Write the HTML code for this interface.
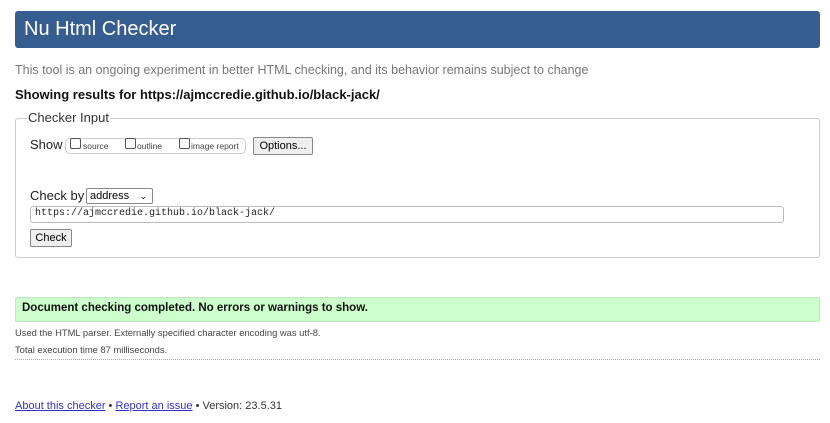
<!DOCTYPE html>
<html><head><style>
body{margin:0;width:830px;height:423px;background:#fff;font-family:"Liberation Sans",sans-serif;color:#000;position:relative;overflow:hidden}
.a{position:absolute;white-space:nowrap}
</style></head><body>
<div class="a" style="left:15px;top:11px;width:805px;height:37px;background:#365d8f;border-radius:3px"></div>
<div class="a" style="left:24px;top:18px;font-size:20px;color:#fff">Nu Html Checker</div>
<div class="a" style="left:15px;top:63px;font-size:12.5px;color:#777">This tool is an ongoing experiment in better HTML checking, and its behavior remains subject to change</div>
<div class="a" style="left:15px;top:87px;font-size:13px;font-weight:bold;color:#111">Showing results for https://ajmccredie.github.io/black-jack/</div>
<div class="a" style="left:15px;top:118px;width:803px;height:138px;border:1px solid #ccc;border-radius:3px"></div>
<div class="a" style="left:27px;top:110px;font-size:13px;background:#fff;padding:0 1px;color:#333">Checker Input</div>
<div class="a" style="left:30px;top:137px;font-size:13px;color:#222">Show</div>
<div class="a" style="left:65px;top:138px;width:179px;height:14px;border:1px solid #ccc;border-radius:5px"></div>
<div class="a" style="left:70px;top:138px;width:9px;height:9px;border:1px solid #555;border-radius:2px"></div>
<div class="a" style="left:83px;top:141px;font-size:8.5px;color:#444">source</div>
<div class="a" style="left:125px;top:138px;width:9px;height:9px;border:1px solid #555;border-radius:2px"></div>
<div class="a" style="left:137px;top:141px;font-size:8.5px;color:#444">outline</div>
<div class="a" style="left:179px;top:138px;width:9px;height:9px;border:1px solid #555;border-radius:2px"></div>
<div class="a" style="left:191px;top:141px;font-size:8.5px;color:#444">image report</div>
<div class="a" style="left:253px;top:137px;width:58px;height:16px;border:1px solid #888;border-radius:2px;background:#eee;font-size:11px;text-align:center;line-height:16px">Options...</div>
<div class="a" style="left:30px;top:188px;font-size:13px;color:#222">Check by</div>
<div class="a" style="left:86px;top:188px;width:62px;height:14px;border:1px solid #888;border-radius:2px;font-size:11px;line-height:14px;padding-left:3px;box-sizing:content-box">address<span style="position:absolute;right:5px;top:0;font-size:9px">⌄</span></div>
<div class="a" style="left:30px;top:206px;width:752px;height:15px;border:1px solid #bbb;border-radius:3px"></div>
<div class="a" style="left:35px;top:208px;font-family:'Liberation Mono',monospace;font-size:10px;color:#222">https://ajmccredie.github.io/black-jack/</div>
<div class="a" style="left:30px;top:229px;width:40px;height:16px;border:1px solid #888;border-radius:2px;background:#eee;font-size:11px;text-align:center;line-height:16px">Check</div>
<div class="a" style="left:15px;top:297px;width:803px;height:23px;background:#ccffcc;border:1px solid #bfe6bf;border-radius:2px"></div>
<div class="a" style="left:22px;top:302px;font-size:11.5px;font-weight:bold;color:#111">Document checking completed. No errors or warnings to show.</div>
<div class="a" style="left:15px;top:327px;font-size:9.4px;color:#444">Used the HTML parser. Externally specified character encoding was utf-8.</div>
<div class="a" style="left:15px;top:344px;font-size:9.4px;color:#444">Total execution time 87 milliseconds.</div>
<div class="a" style="left:15px;top:359px;width:805px;border-top:1px dotted #aaa"></div>
<div class="a" style="left:15px;top:400px;font-size:11px;color:#333"><span style="color:#33c;text-decoration:underline">About this checker</span> • <span style="color:#33c;text-decoration:underline">Report an issue</span> • Version: 23.5.31</div>
</body></html>
